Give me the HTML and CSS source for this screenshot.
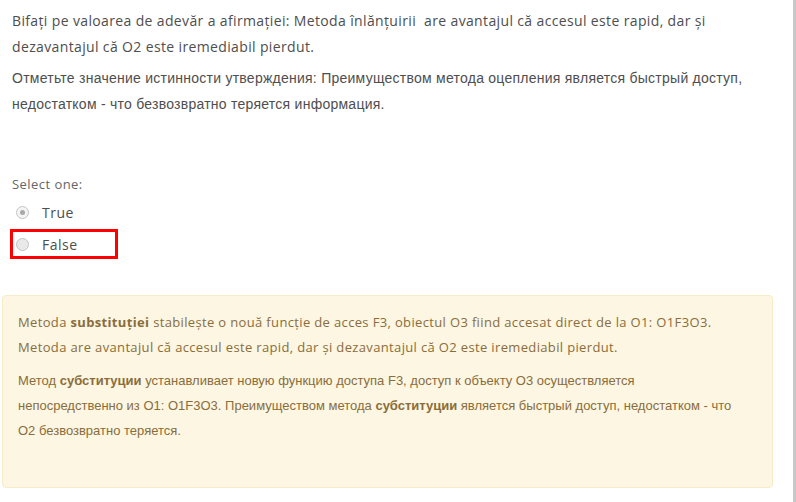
FILE: index.html
```html
<!DOCTYPE html>
<html lang="ro">
<head>
<meta charset="utf-8">
<title>Question</title>
<link rel="stylesheet" href="styles.css">
</head>
<body>
<div class="page">
  <div class="que">
    <div class="qtext">
      <p class="lat">Bifați pe valoarea de adevăr a afirmației: Metoda înlănțuirii &nbsp;are avantajul că accesul este rapid, dar şi dezavantajul că O2 este iremediabil pierdut.</p>
      <p class="cyr">Отметьте значение истинности утверждения: Преимуществом метода оцепления является быстрый доступ, недостатком - что безвозвратно теряется информация.</p>
    </div>
    <div class="ablock">
      <div class="prompt">Select one:</div>
      <div class="answer">
        <div class="opt">
          <span class="radio checked"></span>
          <span class="label">True</span>
        </div>
        <div class="opt marked">
          <span class="radio"></span>
          <span class="label">False</span>
        </div>
      </div>
    </div>
  </div>
  <div class="feedback">
    <p class="lat small">Metoda <b>substituţiei</b> stabileşte o nouă funcţie de acces F3, obiectul O3 fiind accesat direct de la O1: O1F3O3.<br>Metoda are avantajul că accesul este rapid, dar şi dezavantajul că O2 este iremediabil pierdut.</p>
    <p class="cyr small">Метод <b>субституции</b> устанавливает новую функцию доступа F3, доступ к объекту O3 осуществляется<br>непосредственно из O1: O1F3O3. Преимуществом метода <b>субституции</b> является быстрый доступ, недостатком - что<br>O2 безвозвратно теряется.</p>
  </div>
</div>
</body>
</html>
```
FILE: styles.css
```css
html, body {
  margin: 0;
  padding: 0;
  background: #ffffff;
}
.page {
  width: 793px;
  height: 502px;
  border-right: 3px solid #c8c8c8;
  overflow: hidden;
}
.que {
  padding: 8px 12px 0 12px;
  color: #4e4e4e;
}
.qtext p {
  margin: 0 0 7px 0;
  line-height: 25.5px;
}
.lat {
  font-family: "Open Sans", "Liberation Sans", sans-serif;
  font-size: 14px;
  letter-spacing: 0.36px;
}
.cyr {
  font-family: "Liberation Sans", Arial, sans-serif;
  font-size: 14px;
  letter-spacing: 0.25px;
}
.ablock {
  margin-top: 57px;
}
.prompt {
  font-family: "Open Sans", "Liberation Sans", sans-serif;
  font-size: 13px;
  letter-spacing: 0.45px;
  color: #666666;
  line-height: 20px;
}
.answer {
  display: flex;
  flex-direction: column;
  gap: 2px;
  margin-top: 3px;
}
.opt {
  display: flex;
  align-items: center;
  gap: 13px;
  height: 30px;
  width: 108px;
  box-sizing: border-box;
  margin-left: -2px;
  padding-left: 3px;
  border: 3px solid transparent;
}
.opt.marked {
  border-color: #ff0000;
}
.radio {
  width: 11px;
  height: 11px;
  border-radius: 50%;
  border: 1px solid #c4c4c4;
  background: #e9e9e9;
  position: relative;
  flex: none;
}
.radio.checked {
  background: #f4f4f4;
}
.radio.checked::after {
  content: "";
  position: absolute;
  left: 3px;
  top: 3px;
  width: 5px;
  height: 5px;
  border-radius: 50%;
  background: #a8a8a8;
}
.label {
  font-family: "Open Sans", "Liberation Sans", sans-serif;
  font-size: 14px;
  letter-spacing: 0.5px;
  color: #4e4e4e;
}
.feedback {
  margin: 36px 0 0 2px;
  width: 771px;
  height: 193px;
  box-sizing: border-box;
  background: #fcf6e2;
  border: 1px solid #f8ecc8;
  border-radius: 4px;
  padding: 14px 20px 14px 15px;
  color: #8a6d3b;
}
.feedback p {
  margin: 0 0 8px 0;
  line-height: 25px;
}
.feedback .lat.small {
  font-size: 13px;
  letter-spacing: 0.35px;
}
.feedback .cyr.small {
  font-size: 13px;
  letter-spacing: 0;
}
.feedback b {
  font-weight: 700;
}
```
